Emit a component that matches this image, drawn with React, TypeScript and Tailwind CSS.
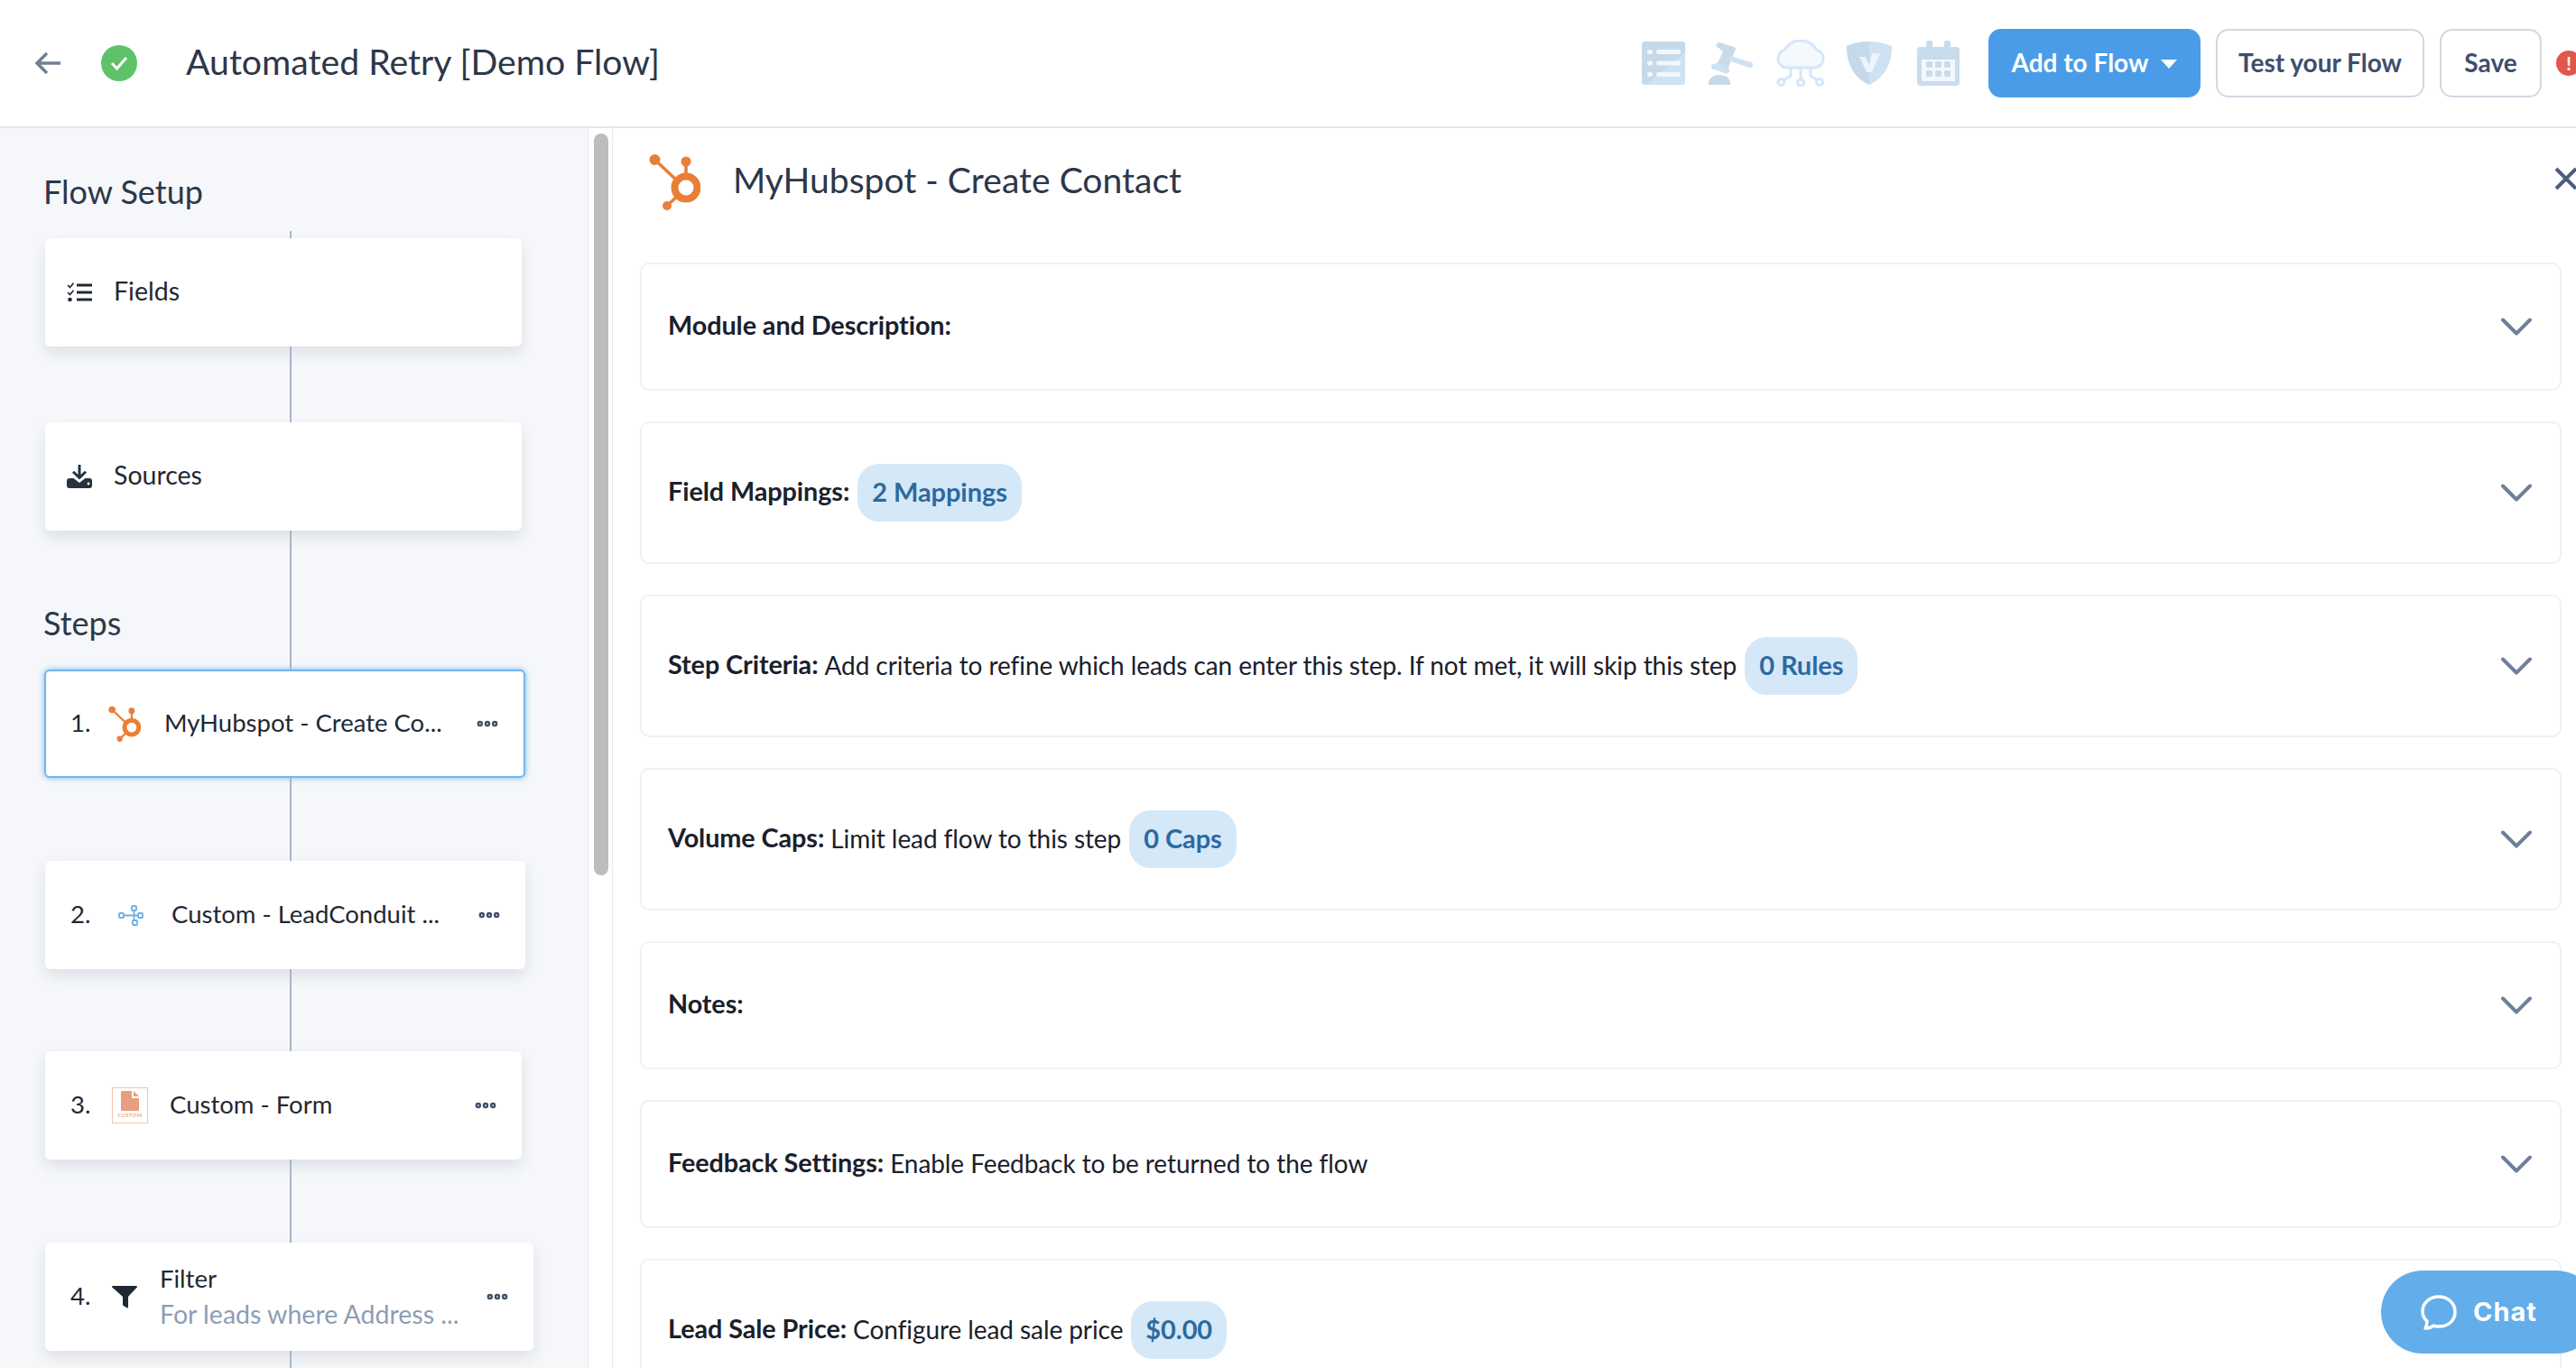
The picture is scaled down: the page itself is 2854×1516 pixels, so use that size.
import { ChevronDown, Ellipsis } from "lucide-react";
import type { ReactNode } from "react";

const Hubspot = ({ className }: { className: string }) => (
  <svg viewBox="0 0 57 63" className={className} fill="#e97f36" stroke="#e97f36">
    <circle cx="41" cy="38" r="12.5" fill="none" strokeWidth="8" />
    <circle cx="6.5" cy="7" r="6" stroke="none" />
    <circle cx="41" cy="9" r="5.5" stroke="none" />
    <circle cx="20" cy="58" r="5" stroke="none" />
    <path d="M6.5 7 32 31M41 9v18M20 58l13-12" strokeWidth="3.6" fill="none" />
  </svg>
);

const FieldsIcon = () => (
  <svg viewBox="0 0 28 22" className="w-[28px] h-[22px]" fill="none" stroke="#1f2933">
    <path d="M1 3l2.5 2.5L7.5 .8M1 11l2.5 2.5 4-4.7" strokeWidth="1.7" />
    <circle cx="3.5" cy="19" r="2.3" fill="#1f2933" stroke="none" />
    <path d="M11 3h17M11 11h17M11 19h17" strokeWidth="3" />
  </svg>
);

const SourcesIcon = () => (
  <svg viewBox="0 0 28 26" className="w-[28px] h-[26px]" fill="#253240">
    <path d="M12.5 0h3v11l4.5-4.300 2 2L14 16.500 6 8.700l2-2 4.500 4.300z" />
    <path d="M3 15h4.500l6.500 5 6.500-5H25a3 3 0 0 1 3 3v5a3 3 0 0 1-3 3H3a3 3 0 0 1-3-3v-5a3 3 0 0 1 3-3z" />
    <circle cx="24" cy="21" r="1.400" fill="#fff" />
  </svg>
);

const NetworkIcon = () => (
  <svg viewBox="0 0 28 23" className="w-[28px] h-[23px]" fill="none" stroke="#6eaee0" strokeWidth="1.800">
    <rect x="1" y="9" width="5" height="5" rx="1" />
    <rect x="15" y="1" width="5" height="5" rx="1" />
    <rect x="22" y="9" width="5" height="5" rx="1" />
    <rect x="16" y="17" width="5" height="5" rx="1" />
    <path d="M6 11.500h16M17.500 6v11" />
  </svg>
);

const CustomIcon = () => (
  <div className="w-[40px] h-[40px] border border-[#f2c5ae] flex flex-col items-center pt-[3px]">
    <svg viewBox="0 0 20 22" className="w-[20px] h-[22px]">
      <path d="M1 0h11v8h8v13a1 1 0 0 1-1 1H1a1 1 0 0 1-1-1V1a1 1 0 0 1 1-1z" fill="#e99f7f" />
      <path d="M14 0l6 6h-6z" fill="#e99f7f" />
    </svg>
    <span className="text-[6px] leading-[9px] tracking-[0.3px] font-bold text-[#eeaa8c]">CUSTOM</span>
  </div>
);

const Funnel = () => (
  <svg viewBox="0 0 28 25" className="w-[28px] h-[25px]" fill="#1f2933">
    <path d="M1 0h26a1 1 0 0 1 .8 1.600L18 12v11.500a1 1 0 0 1-1.500.8l-4-2.500a1 1 0 0 1-.5-.8V12L.2 1.600A1 1 0 0 1 1 0z" />
  </svg>
);

const TableIcon = () => (
  <svg viewBox="0 0 48 48" className="w-[48px] h-[48px]">
    <rect width="48" height="48" rx="4" fill="#cfe2f3" />
    <path d="M4 0h40a4 4 0 0 1 4 4v10L10 48H4a4 4 0 0 1-4-4V4a4 4 0 0 1 4-4z" fill="#c5d9ea" />
    <path d="M4 48 48 12v32a4 4 0 0 1-4 4z" fill="#cfe2f3" />
    <g fill="#f2f7fc">
      <rect x="6" y="9" width="6" height="5" rx="2.500" />
      <rect x="16" y="9" width="27" height="5" rx="2.500" />
      <rect x="6" y="21.500" width="6" height="5" rx="2.500" />
      <rect x="16" y="21.500" width="27" height="5" rx="2.500" />
      <rect x="6" y="34" width="6" height="5" rx="2.500" />
      <rect x="16" y="34" width="27" height="5" rx="2.500" />
    </g>
  </svg>
);

const GavelIcon = () => (
  <svg viewBox="0 0 50 48" className="w-[50px] h-[48px]">
    <path d="M12 1l16 5a3 3 0 0 1 1 5l-1 2-6 16 1 3a3 3 0 0 1-4 3L6 31a3 3 0 0 1 0-6l4-1 6-13-5-4a3 3 0 0 1 1-6z" fill="#c8dbeb" />
    <path d="M10 24 22 29l1 3a3 3 0 0 1-4 3L6 31a3 3 0 0 1 0-6z" fill="#cfe2f3" />
    <path d="M24 16l23 7a3 3 0 0 1-2 6l-23-8z" fill="#cfe2f3" />
    <path d="M0 48v-2c0-5 5-9 12-9s12 4 12 9v2z" fill="#c5d9ea" />
  </svg>
);

const CloudIcon = () => (
  <svg viewBox="0 0 54 52" className="w-[54px] h-[52px]" fill="none" stroke="#d5e6f8" strokeWidth="3">
    <path d="M12 31a10 10 0 0 1-2.500-19.700A20 20 0 0 1 44.500 11.300 10 10 0 0 1 42 31z" fill="#f5f9fe" />
    <path d="M16 31v9l-8 5M27 31v13M38 31v9l8 5" />
    <circle cx="5.500" cy="47" r="3.500" />
    <circle cx="27" cy="47.500" r="3.500" />
    <circle cx="48" cy="47" r="3.500" />
  </svg>
);

const ShieldIcon = () => (
  <svg viewBox="0 0 50 48" className="w-[50px] h-[48px]">
    <path d="M25 0C16 0 7 2 0 5c0 20 8 35 25 43 17-8 25-23 25-43-7-3-16-5-25-5z" fill="#cfe2f3" />
    <path d="M25 0C16 0 7 2 0 5c0 20 8 35 25 43z" fill="#c5d9ea" />
    <path d="M14 17h7l4 9 3-13h9l-9 21h-6z" fill="#edf4fb" />
  </svg>
);

const CalendarIcon = () => (
  <svg viewBox="0 0 47 50" className="w-[47px] h-[50px]">
    <rect y="7" width="47" height="43" rx="4" fill="#c8dcec" />
    <rect x="10" width="7" height="12" rx="2" fill="#c8dcec" />
    <rect x="30" width="7" height="12" rx="2" fill="#c8dcec" />
    <rect x="5" y="21" width="37" height="24" fill="#f3f8fc" />
    <g fill="#c8dcec">
      <rect x="10" y="23" width="7" height="7" rx="1.500" />
      <rect x="20" y="23" width="7" height="7" rx="1.500" />
      <rect x="30" y="23" width="7" height="7" rx="1.500" />
      <rect x="10" y="33" width="7" height="7" rx="1.500" />
      <rect x="20" y="33" width="7" height="7" rx="1.500" />
      <rect x="30" y="33" width="7" height="7" rx="1.500" />
    </g>
  </svg>
);

const Connector = ({ h }: { h: string }) => <div className={`ml-[321px] w-[2px] bg-[#aab6c8] ${h}`} />;

const SetupCard = ({ icon, label }: { icon: ReactNode; label: string }) => (
  <div className="h-[120px] w-[528px] ml-[50px] bg-white rounded-[6px] shadow-[0_7px_16px_rgba(30,41,59,0.11)] flex items-center pl-[24px] gap-[24px] text-[28.500px] text-[#1f2933]">
    {icon}
    <span className="pb-[3px]">{label}</span>
  </div>
);

const StepCard = ({
  n,
  icon,
  title,
  sub,
  width,
  iconBox,
  textX,
  active,
}: {
  n: string;
  icon: ReactNode;
  title: string;
  sub?: string;
  width: string;
  iconBox: string;
  textX: string;
  active?: boolean;
}) => (
  <div
    className={`h-[120px] bg-white rounded-[6px] flex items-center pr-[26px] text-[27.500px] text-[#1f2933] ${width} ${
      active
        ? "ml-[49px] pl-[27px] border-2 border-[#74b6ee] shadow-[0_0_6px_rgba(99,174,234,0.9)]"
        : "ml-[50px] pl-[28px] shadow-[0_7px_16px_rgba(30,41,59,0.11)]"
    }`}
  >
    <span className={`pb-[3px] ${iconBox}`}>{n}</span>
    <span className={textX}>{icon}</span>
    <div className="flex-1 min-w-0 pb-[3px]">
      <div className="truncate">{title}</div>
      {sub && <div className="truncate text-[#8d9db5] text-[28.500px] leading-[38px]">{sub}</div>}
    </div>
    <Ellipsis className="w-[28px] h-[28px] text-[#3f4f66]" strokeWidth={3.5} />
  </div>
);

const Pill = ({ children }: { children: ReactNode }) => (
  <span className="ml-[9px] inline-flex items-center h-[64px] px-[16px] rounded-[24px] bg-[#d5e8f8] text-[#2c6aa0] text-[29px] font-bold">
    <span className="pb-[3px]">{children}</span>
  </span>
);

const Row = ({
  label,
  text,
  pill,
  tall,
}: {
  label: string;
  text?: string;
  pill?: string;
  tall?: boolean;
}) => (
  <div
    className={`shrink-0 border-2 border-[#f0f1f3] rounded-[10px] flex items-center pl-[29px] pr-[18px] text-[28px] tracking-[-0.08px] text-[#1a202c] ${
      tall ? "h-[158px]" : "h-[142px]"
    }`}
  >
    <b className="font-bold text-[28.800px] pb-[3px]">{label}</b>
    {text && <span className="ml-[7px] pb-[3px]">{text}</span>}
    {pill && <Pill>{pill}</Pill>}
    <ChevronDown className="ml-auto w-[60px] h-[60px] text-[#6e7f9a]" strokeWidth={1.6} />
  </div>
);

export default function App() {
  return (
    <div className="relative h-[1516px] overflow-hidden bg-white font-[Lato,sans-serif]">
      {/* Top bar */}
      <header className="h-[142px] border-b-2 border-[#e2e8f0] flex items-center pl-[38px]">
        <svg viewBox="0 0 30 26" className="w-[30px] h-[26px]" fill="none" stroke="#718096" strokeWidth="3.500">
          <path d="M14 2 3 13l11 11M3 13h26" />
        </svg>
        <div className="ml-[44px] w-[40px] h-[40px] rounded-full bg-[#5ec269] flex items-center justify-center">
          <svg viewBox="0 0 20 16" className="w-[20px] h-[16px]" fill="none" stroke="#fff" strokeWidth="3">
            <path d="M2 8l5.500 6L18 2" />
          </svg>
        </div>
        <h1 className="ml-[54px] pb-[3px] text-[39.200px] text-[#2d3748]">Automated Retry [Demo Flow]</h1>
        <div className="ml-auto flex items-center">
          <TableIcon />
          <span className="ml-[26px]"><GavelIcon /></span>
          <span className="ml-[25px]"><CloudIcon /></span>
          <span className="ml-[24px]"><ShieldIcon /></span>
          <span className="ml-[28px]"><CalendarIcon /></span>
          <button className="ml-[32px] pb-[2px] w-[235px] h-[76px] rounded-[14px] bg-[#4a9ce8] text-white text-[28px] font-bold flex items-center justify-center gap-[14px]">
            Add to Flow
            <span className="w-0 h-0 mt-[3px] border-x-[9px] border-x-transparent border-t-[10px] border-t-white" />
          </button>
          <button className="ml-[17px] pb-[2px] w-[231px] h-[76px] rounded-[14px] border-2 border-[#d3d8e2] text-[#3e4e6c] text-[28px] font-bold">
            Test your Flow
          </button>
          <button className="ml-[17px] pb-[2px] w-[113px] h-[76px] rounded-[14px] border-2 border-[#d3d8e2] text-[#3e4e6c] text-[28px] font-bold">
            Save
          </button>
          <span className="ml-[16px] -mr-[6px] w-[28px] h-[28px] rounded-full bg-[#e2574c] text-white text-[20px] font-bold leading-[28px] text-center">
            !
          </span>
        </div>
      </header>

      <div className="flex h-[1374px]">
        {/* Flow sidebar */}
        <aside className="w-[651px] shrink-0 bg-[#f5f7fa] overflow-hidden">
          <h2 className="pt-[48px] text-[36px] leading-[44px] pl-[48px] text-[#2d3748] h-[114px]">Flow Setup</h2>
          <Connector h="h-[8px]" />
          <SetupCard icon={<FieldsIcon />} label="Fields" />
          <Connector h="h-[84px]" />
          <SetupCard icon={<SourcesIcon />} label="Sources" />
          <div className="relative h-[154px]">
            <div className="absolute left-[321px] top-0 bottom-0 w-[2px] bg-[#aab6c8]" />
            <h2 className="pt-[80px] pl-[48px] text-[36px] leading-[44px] text-[#2d3748]">Steps</h2>
          </div>
          <StepCard
            n="1."
            icon={<Hubspot className="w-[36px] h-[40px]" />}
            title="MyHubspot - Create Co..."
            width="w-[533px]"
            iconBox="w-[42px]"
            textX="w-[62px]"
            active
          />
          <Connector h="h-[92px]" />
          <StepCard
            n="2."
            icon={<NetworkIcon />}
            title="Custom - LeadConduit ..."
            width="w-[532px]"
            iconBox="w-[53px]"
            textX="w-[59px]"
          />
          <Connector h="h-[91px]" />
          <StepCard
            n="3."
            icon={<CustomIcon />}
            title="Custom - Form"
            width="w-[528px]"
            iconBox="w-[46px]"
            textX="w-[64px]"
          />
          <Connector h="h-[92px]" />
          <StepCard
            n="4."
            icon={<Funnel />}
            title="Filter"
            sub="For leads where Address ..."
            width="w-[541px]"
            iconBox="w-[46px]"
            textX="w-[53px]"
          />
          <Connector h="h-[20px]" />
        </aside>

        {/* Scrollbar */}
        <div className="w-[28px] shrink-0 border-x border-[#e8eaee] pl-[6px] pt-[6px]">
          <div className="w-[16px] h-[822px] rounded-full bg-[#bdbdbd]" />
        </div>

        {/* Step detail panel */}
        <main className="flex-1 min-w-0 pl-[30px] pr-[16px] flex flex-col">
          <div className="relative h-[149px] shrink-0 flex items-start">
            <Hubspot className="ml-[10px] mt-[28px] w-[57px] h-[63px]" />
            <h2 className="ml-[36px] mt-[32px] text-[39.100px] leading-[50px] text-[#2d3748]">MyHubspot - Create Contact</h2>
            <svg viewBox="0 0 26 26" className="absolute right-[-18px] top-[43px] w-[26px] h-[26px]" fill="none" stroke="#4a5d7e" strokeWidth="4">
              <path d="M2 2l22 22M24 2 2 24" />
            </svg>
          </div>
          <div className="flex flex-col gap-[34px]">
            <Row label="Module and Description:" />
            <Row label="Field Mappings:" pill="2 Mappings" tall />
            <Row
              label="Step Criteria:"
              text="Add criteria to refine which leads can enter this step. If not met, it will skip this step"
              pill="0 Rules"
              tall
            />
            <Row label="Volume Caps:" text="Limit lead flow to this step" pill="0 Caps" tall />
            <Row label="Notes:" />
            <Row label="Feedback Settings:" text="Enable Feedback to be returned to the flow" />
            <Row label="Lead Sale Price:" text="Configure lead sale price" pill="$0.00" tall />
          </div>
        </main>
      </div>

      {/* Chat launcher */}
      <button className="absolute left-[2638px] top-[1408px] w-[240px] h-[92px] rounded-full bg-[#63aeea] text-white flex items-center pl-[44px] gap-[18px] font-[Inter,sans-serif] font-bold text-[29px] tracking-[1px]">
        <svg viewBox="0 0 40 40" className="w-[40px] h-[40px]" fill="none" stroke="#fff" strokeWidth="3.500">
          <path d="M7 30C3 27 2 23 2 19 2 10 10 3 20 3s18 7 18 17-8 16-18 16c-2 0-4 0-6-1-2 2-6 3-9 3 1-2 2-5 2-8z" strokeLinejoin="round" />
        </svg>
        Chat
      </button>
    </div>
  );
}
